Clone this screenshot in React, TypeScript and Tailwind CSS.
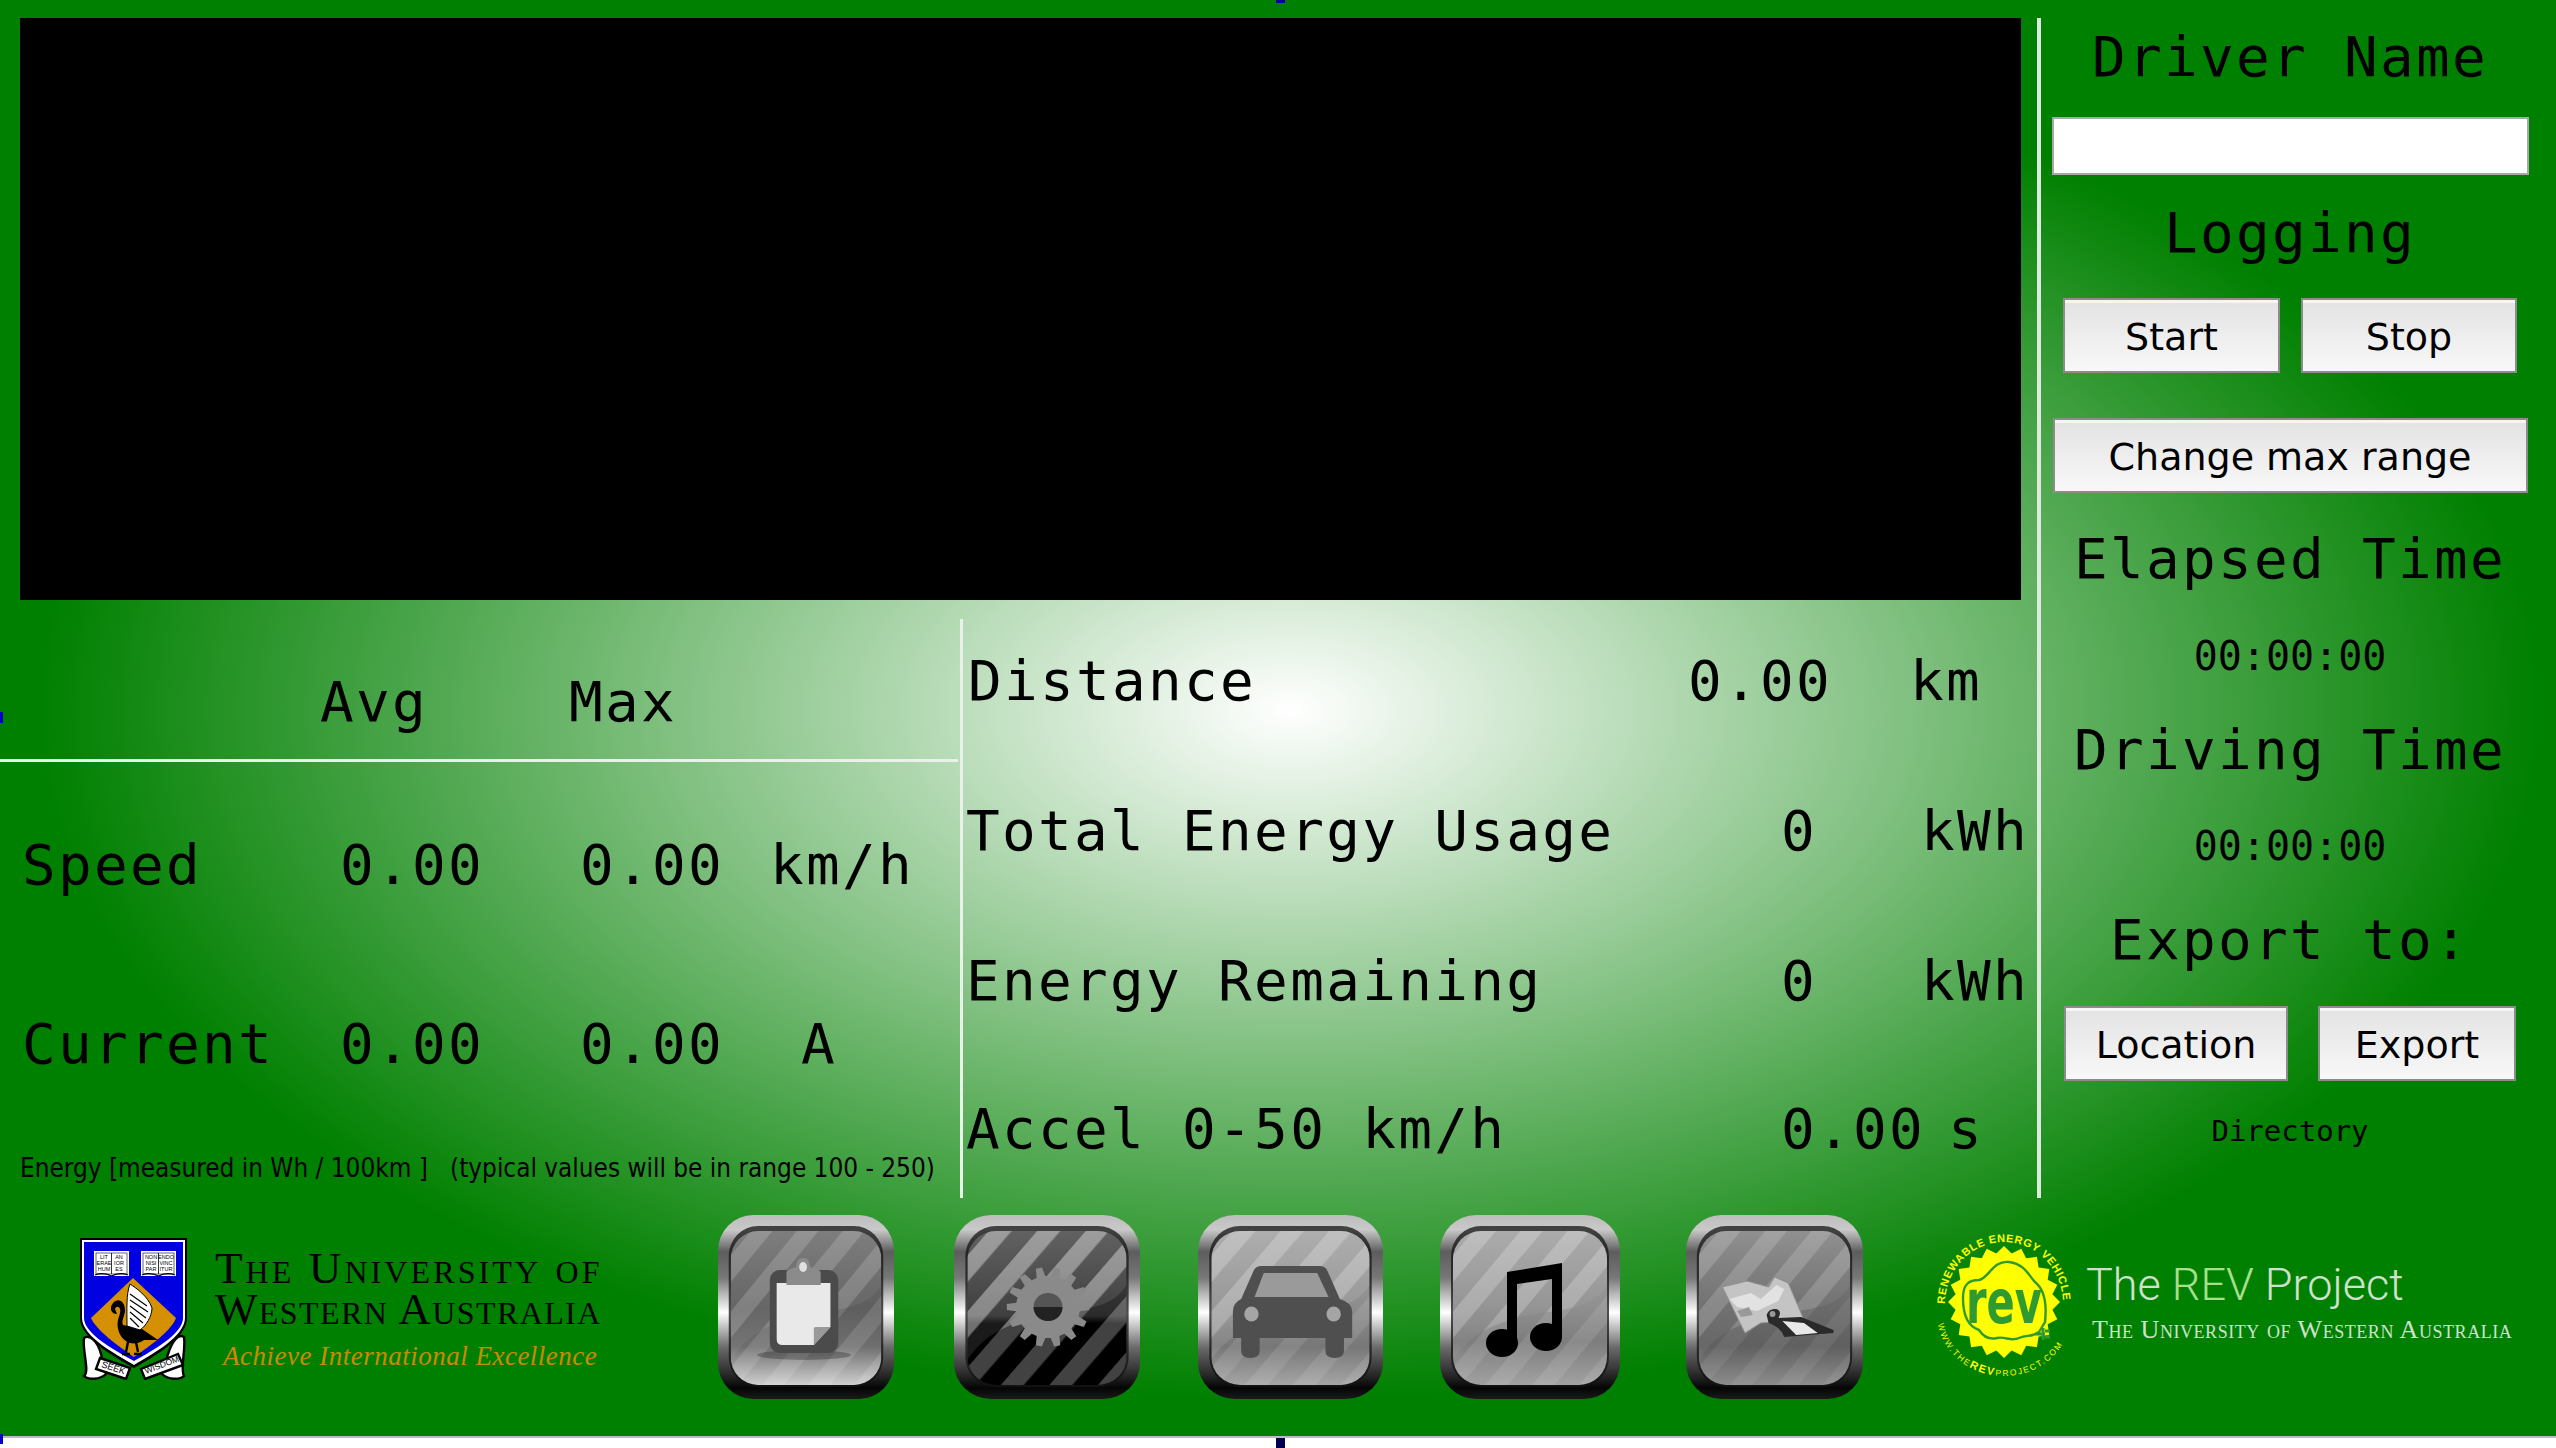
import React from "react";

const mono = "font-['DejaVu_Sans_Mono',monospace] text-[56px] tracking-[2.3px] leading-none whitespace-pre";

const Stripes = ({ id, opacity, width = 17 }: { id: string; opacity: number; width?: number }) => (
  <pattern id={id} width="36" height="36" patternUnits="userSpaceOnUse" patternTransform="rotate(40)">
    <rect width={width} height="36" fill="#fff" opacity={opacity} />
  </pattern>
);

type Face = { id: string; stops: [number, string][]; stripe: number; stripeBottom: number; glossDark: number };

const MetalButton = ({ face, className, children }: { face: Face; className: string; children: React.ReactNode }) => (
  <svg viewBox="0 0 180 184" preserveAspectRatio="none" className={className}>
    <defs>
      <linearGradient id={`${face.id}-frame`} x1="0" y1="0" x2="0" y2="1">
        <stop offset="0" stopColor="#bdbdbd" />
        <stop offset="0.08" stopColor="#c9c9c9" />
        <stop offset="0.2" stopColor="#5d5d5d" />
        <stop offset="0.34" stopColor="#777" />
        <stop offset="0.53" stopColor="#fff" />
        <stop offset="0.72" stopColor="#6a6a6a" />
        <stop offset="0.86" stopColor="#2c2c2c" />
        <stop offset="0.94" stopColor="#050505" />
        <stop offset="1" stopColor="#1a1a1a" />
      </linearGradient>
      <linearGradient id={`${face.id}-face`} x1="0" y1="0" x2="0" y2="1">
        {face.stops.map(([o, c]) => (
          <stop key={o} offset={o} stopColor={c} />
        ))}
      </linearGradient>
      <Stripes id={`${face.id}-st`} opacity={face.stripe} />
      <Stripes id={`${face.id}-sb`} opacity={face.stripeBottom} />
      <clipPath id={`${face.id}-clip`}>
        <rect x="13" y="16" width="154" height="154" rx="28" />
      </clipPath>
    </defs>
    <rect x="0" y="0" width="180" height="184" rx="36" fill={`url(#${face.id}-frame)`} />
    <rect x="11" y="11" width="158" height="161" rx="30" fill="#141414" opacity="0.75" />
    <g clipPath={`url(#${face.id}-clip)`}>
      <rect x="13" y="16" width="154" height="154" fill={`url(#${face.id}-face)`} />
      <rect x="13" y="16" width="154" height="154" fill={`url(#${face.id}-sb)`} />
      <path d="M13 16H167V70C150 100 110 92 70 105C45 112 25 125 13 145Z" fill="#fff" opacity={face.glossDark} />
      <path d="M13 16H167V70C150 100 110 92 70 105C45 112 25 125 13 145Z" fill={`url(#${face.id}-st)`} />
    </g>
    {children}
  </svg>
);

const clipboardFace: Face = { id: "clip", stops: [[0, "#777"], [0.5, "#5e5e5e"], [0.75, "#6e6e6e"], [1, "#cfcfcf"]], stripe: 0.05, stripeBottom: 0.12, glossDark: 0.05 };
const gearFace: Face = { id: "gear", stops: [[0, "#505050"], [0.55, "#2a2a2a"], [0.6, "#000"], [1, "#000"]], stripe: 0.16, stripeBottom: 0.26, glossDark: 0.1 };
const carFace: Face = { id: "car", stops: [[0, "#a5a5a5"], [0.55, "#8a8a8a"], [0.75, "#777"], [1, "#a5a5a5"]], stripe: 0.14, stripeBottom: 0.1, glossDark: 0.1 };
const musicFace: Face = { id: "music", stops: [[0, "#a8a8a8"], [0.5, "#8f8f8f"], [0.72, "#7d7d7d"], [1, "#a2a2a2"]], stripe: 0.13, stripeBottom: 0.1, glossDark: 0.05 };
const mapFace: Face = { id: "map", stops: [[0, "#8a8a8a"], [0.5, "#6a6a6a"], [0.75, "#606060"], [1, "#8c8c8c"]], stripe: 0.1, stripeBottom: 0.07, glossDark: 0.05 };

const gearTeeth = () => {
  const pts: string[] = [];
  const n = 14;
  for (let i = 0; i < n; i++) {
    const a = (i / n) * Math.PI * 2;
    const s = Math.PI / n;
    [[31, -s * 0.62], [40, -s * 0.34], [40, s * 0.34], [31, s * 0.62]].forEach(([r, d]) => {
      pts.push(`${(91 + r * Math.cos(a + d)).toFixed(1)},${(92 + r * Math.sin(a + d)).toFixed(1)}`);
    });
  }
  return pts.join(" ");
};

const starPoints = () => {
  const pts: string[] = [];
  const n = 20;
  for (let i = 0; i < n * 2; i++) {
    const a = (i / (n * 2)) * Math.PI * 2;
    const r = i % 2 === 0 ? 56 : 49;
    pts.push(`${(69 + r * Math.cos(a)).toFixed(1)},${(72 + r * Math.sin(a)).toFixed(1)}`);
  }
  return pts.join(" ");
};

const Crest = () => (
  <svg viewBox="0 0 108 142" className="w-[108px] h-[142px] shrink-0">
    <path d="M0 0H107V80C107 100 75 118 54 130C33 118 0 100 0 80Z" fill="#000" />
    <path d="M2 2H105V80C105 98 73 116 54 127C35 116 2 98 2 80Z" fill="#fff" />
    <path d="M4 4H103V80C103 96 72 113 54 123C36 113 4 96 4 80Z" fill="#0000e0" />
    <path d="M53 40L96 80C92 92 70 108 54 119C38 108 16 92 11 80Z" fill="#d49000" />
    {[0, 47].map((dx, i) => (
      <g key={dx} transform={`translate(${dx} 0)`}>
        <rect x="14" y="13" width="35" height="25" fill="#fff" />
        <rect x="16" y="15" width="31" height="21" fill="#fff" stroke="#000" strokeWidth="0.6" />
        <line x1="31.5" y1="15" x2="31.5" y2="36" stroke="#000" strokeWidth="0.8" />
        <path d="M15 37Q23 34 31.5 38Q40 34 48 37" stroke="#000" strokeWidth="1.2" fill="none" />
        <g fontFamily="'Liberation Sans',sans-serif" fontSize="5.5" fill="#000" textAnchor="middle">
          <text x="24" y="21">{i ? "NON" : "LIT"}</text>
          <text x="39" y="21">{i ? "ENDO" : "AN"}</text>
          <text x="24" y="27">{i ? "NISI" : "ERAE"}</text>
          <text x="39" y="27">{i ? "VINC" : "IOR"}</text>
          <text x="24" y="33">{i ? "PAR" : "HUM"}</text>
          <text x="39" y="33">{i ? "ITUR" : "ES"}</text>
        </g>
      </g>
    ))}
    <path d="M37 76C31 76 29 70 33 65C38 59 45 63 45 72C45 78 41 82 43 87L62 91L78 102L64 102C60 105 55 106 50 105C40 102 36 90 38 82C39 78 41 74 40 71C39 68 36 68 35 71L37 76Z" fill="#000" />
    <path d="M47 88C47 72 46 56 50 46C56 50 68 58 72 70C72 78 66 88 60 92Z" fill="#fff" stroke="#000" strokeWidth="1" />
    <path d="M50 56L67 68M50 62L68 74M50 68L66 80M50 74L63 85M50 80L59 89" stroke="#000" strokeWidth="1.2" />
    <path d="M48 104L46 114M56 104L58 114M42 116H50M54 116H62" stroke="#000" strokeWidth="2.4" />
    <path d="M4 100C10 96 18 104 21 116L26 136C20 142 8 142 4 138C10 134 2 112 4 100Z" fill="#fff" stroke="#000" strokeWidth="2.4" />
    <path d="M104 99C98 95 92 104 88 116L82 136C88 142 100 142 104 138C100 130 106 112 104 99Z" fill="#fff" stroke="#000" strokeWidth="2.4" />
    <path d="M20 120L50 130L46 141L16 131Z" fill="#fff" stroke="#000" strokeWidth="2.4" />
    <path d="M61 131L98 116L103 127L65 141Z" fill="#fff" stroke="#000" strokeWidth="2.4" />
    <text transform="translate(21 129) rotate(18)" fontFamily="'Liberation Sans',sans-serif" fontSize="9" fill="#000">SEEK</text>
    <text transform="translate(66 136) rotate(-21)" fontFamily="'Liberation Sans',sans-serif" fontSize="8.5" fill="#000">WISDOM</text>
  </svg>
);

const RevLogo = () => (
  <svg viewBox="0 0 137 145" className="w-[137px] h-[145px] shrink-0 overflow-visible">
    <defs>
      <path id="rev-top" d="M10 74A59 62 0 0 1 128 74" />
      <path id="rev-bottom" d="M2 84A67 62 0 0 0 136 84" />
    </defs>
    <text fontFamily="'Liberation Sans',sans-serif" fontSize="11" fontWeight="700" fill="#ffff00">
      <textPath href="#rev-top" textLength="186" lengthAdjust="spacing">RENEWABLE ENERGY VEHICLE</textPath>
    </text>
    <text fontFamily="'Liberation Sans',sans-serif" fontSize="8.5" fill="#ffff00">
      <textPath href="#rev-bottom" startOffset="10" textLength="160" lengthAdjust="spacing">
        WWW.THE<tspan fontWeight="700" fontSize="11">REV</tspan>PROJECT.COM
      </textPath>
    </text>
    <polygon points={starPoints()} fill="#ffff00" />
    <path d="M28 68C28 54 34 50 44 50C54 48 58 30 74 32C90 34 94 46 100 52C110 60 112 74 110 92L104 102C96 108 92 104 84 108C76 112 70 106 62 108C54 110 48 106 44 100C32 96 28 84 28 68Z" fill="none" stroke="#2f9a2f" strokeWidth="2.4" />
    <path d="M100 104H110M108 98V110M110 101H115M110 107H115" stroke="#2f9a2f" strokeWidth="3" />
    <text x="69" y="93" textAnchor="middle" fontFamily="'DejaVu Sans',sans-serif" fontWeight="700" fontSize="60" textLength="76" lengthAdjust="spacingAndGlyphs" fill="#2f9a2f">rev</text>
  </svg>
);

const Btn = ({ className, children }: { className: string; children: React.ReactNode }) => (
  <button className={`border-2 border-[#8c8c8c] bg-gradient-to-b from-[#e3e3e3] to-[#f8f8f8] shadow-[inset_0_3px_0_#f5f5f5] text-black font-['DejaVu_Sans',sans-serif] text-[38px] leading-none pt-[2px] ${className}`}>
    {children}
  </button>
);

const Row = ({ className, cells }: { className: string; cells: string[] }) => (
  <div className={`grid items-center ${className}`}>
    {cells.map((c, i) => (
      <span key={i} className={mono}>{c}</span>
    ))}
  </div>
);

export default function App() {
  return (
    <div className="relative w-[2556px] h-[1448px] overflow-hidden bg-white">
      <div className="h-[1438px] bg-[#008000] bg-[radial-gradient(ellipse_1250px_690px_at_1290px_710px,#ffffff_0%,#008000_100%)] text-black flex flex-col border-b-2 border-[#bbbbbb]">
        <div className="flex h-[1198px] pt-[18px] shrink-0">
          <div className="w-[2037px] flex flex-col shrink-0">
            <div className="ml-[20px] w-[2001px] h-[582px] bg-black shrink-0" />
            <div className="flex flex-1 pt-[19px]">
              <div className="w-[958px] flex flex-col shrink-0">
                <div className="h-[143px] pl-[320px] pt-[55px] flex gap-[141px] shrink-0 border-b-[3px] border-[#e8f2e8]">
                  <span className={mono}>Avg</span>
                  <span className={mono}>Max</span>
                </div>
                <Row className="h-[102px] mt-[52px] grid-cols-[318px_240px_190px_1fr] pl-[22px]" cells={["Speed", "0.00", "0.00", "km/h"]} />
                <Row className="h-[102px] mt-[77px] grid-cols-[318px_240px_221px_1fr] pl-[22px]" cells={["Current", "0.00", "0.00", "A"]} />
                <p className="ml-[20px] mt-[61px] text-[25.9px] leading-none whitespace-pre font-['DejaVu_Sans_Condensed','DejaVu_Sans',sans-serif]">
                  {"Energy [measured in Wh / 100km ]   (typical values will be in range 100 - 250)"}
                </p>
              </div>
              <div className="w-[3px] bg-[#e8f2e8] ml-[2px] shrink-0" />
              <div className="flex-1 pl-[3px] flex flex-col">
                <Row className="h-[60px] mt-[32px] grid-cols-[720px_222px_1fr] pl-[2px]" cells={["Distance", "0.00", "km"]} />
                <Row className="h-[60px] mt-[90px] grid-cols-[815px_140px_1fr]" cells={["Total Energy Usage", "0", "kWh"]} />
                <Row className="h-[60px] mt-[90px] grid-cols-[815px_140px_1fr]" cells={["Energy Remaining", "0", "kWh"]} />
                <Row className="h-[60px] mt-[88px] grid-cols-[815px_167px_1fr]" cells={["Accel 0-50 km/h", "0.00", "s"]} />
              </div>
            </div>
          </div>
          <div className="w-[4px] bg-[#dfe9df] shrink-0" />
          <div className="flex-1 flex flex-col items-center pr-[17px]">
            <div className={`h-[78px] flex items-center ${mono}`}>Driver Name</div>
            <input className="w-[477px] h-[58px] mt-[21px] bg-white border-2 border-[#a8a8a8]" readOnly />
            <div className={`h-[78px] mt-[19px] flex items-center ${mono}`}>Logging</div>
            <div className="mt-[26px] flex gap-[21px]">
              <Btn className="w-[217px] h-[75px]">Start</Btn>
              <Btn className="w-[216px] h-[75px]">Stop</Btn>
            </div>
            <Btn className="w-[475px] h-[75px] mt-[45px]">Change max range</Btn>
            <div className={`h-[78px] mt-[27px] flex items-center ${mono}`}>Elapsed Time</div>
            <div className="h-[50px] mt-[33px] flex items-center font-['DejaVu_Sans_Mono',monospace] text-[40px]">00:00:00</div>
            <div className={`h-[78px] mt-[30px] flex items-center ${mono}`}>Driving Time</div>
            <div className="h-[50px] mt-[32px] flex items-center font-['DejaVu_Sans_Mono',monospace] text-[40px]">00:00:00</div>
            <div className={`h-[78px] mt-[30px] flex items-center ${mono}`}>Export to:</div>
            <div className="mt-[27px] flex gap-[30px]">
              <Btn className="w-[224px] h-[75px]">Location</Btn>
              <Btn className="w-[198px] h-[75px]">Export</Btn>
            </div>
            <div className="h-[40px] mt-[31px] flex items-center font-['DejaVu_Sans_Mono',monospace] text-[29px]">Directory</div>
          </div>
        </div>

        <div className="flex-1 flex items-start">
          <div className="ml-[80px] mt-[40px] shrink-0">
            <Crest />
          </div>
          <div className="ml-[27px] mt-[50px] w-[420px] shrink-0 font-['Liberation_Serif',serif]">
            <p className="text-[45px] leading-[41px] [font-variant:small-caps] tracking-[3.1px] whitespace-nowrap">The University of</p>
            <p className="text-[45px] leading-[41px] [font-variant:small-caps] tracking-[1.4px] whitespace-nowrap">Western Australia</p>
            <p className="mt-[13px] ml-[8px] text-[27px] leading-none italic tracking-[0.5px] text-[#cc8a00] whitespace-nowrap">Achieve International Excellence</p>
          </div>
          <div className="ml-[83px] mt-[17px] flex shrink-0">
            <MetalButton face={clipboardFace} className="w-[176px] h-[184px] shrink-0">
              <ellipse cx="88" cy="140" rx="48" ry="5" fill="#000" opacity="0.25" />
              <rect x="53" y="55" width="70" height="83" rx="10" fill="#4b4b4b" />
              <path d="M60 68H115V112L98 130H66Q60 130 60 124Z" fill="#e9e9e9" />
              <path d="M98 130V114Q98 112 100 112H115Z" fill="#9a9a9a" />
              <path d="M70 70V58Q70 55 74 54L80 52Q80 43 87 43Q94 43 94 52L100 54Q105 55 105 58V70Z" fill="#8b8b8b" />
              <ellipse cx="87" cy="52" rx="4" ry="5" fill="#e0e0e0" />
            </MetalButton>
            <MetalButton face={gearFace} className="w-[186px] h-[184px] ml-[60px] shrink-0">
              <polygon points={gearTeeth()} fill="#8a8a8a" />
              <circle cx="91" cy="92" r="14" fill="#555" />
              <path d="M77 92H105A14 14 0 0 1 77 92Z" fill="#222" />
            </MetalButton>
            <MetalButton face={carFace} className="w-[185px] h-[184px] ml-[58px] shrink-0">
              <path d="M34 123V96Q34 88 42 84L54 56Q56 51 62 51H118Q124 51 126 56L138 84Q150 88 150 96V123H142V136Q142 143 133 143Q124 143 124 136V123H60V136Q60 143 51 143Q42 143 42 136V123Z" fill="#4f4f4f" />
              <path d="M64 58H116L127 82H55Z" fill="#9a9a9a" />
              <ellipse cx="52" cy="99" rx="7" ry="7.5" fill="#a5a5a5" />
              <ellipse cx="132" cy="99" rx="7" ry="7.5" fill="#a5a5a5" />
            </MetalButton>
            <MetalButton face={musicFace} className="w-[180px] h-[184px] ml-[57px] shrink-0">
              <path d="M67 57L122 48V122H112V64L77 69V128H67Z" fill="#000" />
              <ellipse cx="62" cy="128" rx="16" ry="14" fill="#000" />
              <ellipse cx="106" cy="122" rx="16" ry="14" fill="#000" />
            </MetalButton>
            <MetalButton face={mapFace} className="w-[177px] h-[184px] ml-[66px] shrink-0">
              <path d="M37 72L62 66L84 72L90 62L104 68L120 105L76 108L60 118Z" fill="#c4c4c4" stroke="#8f8f8f" strokeWidth="1" />
              <path d="M44 84L66 78L76 84L92 70L100 74L94 86L72 96L52 92Z" fill="#e2e2e2" />
              <path d="M52 96L64 92L68 100L56 102Z" fill="#999" />
              <path d="M82 100Q84 93 92 94Q98 96 94 103L117 102L150 115L150 118L100 122Q96 112 84 108Z" fill="#2a2a2a" />
              <path d="M98 106L120 108L134 118L112 120Z" fill="#e8e8e8" />
              <circle cx="88" cy="99" r="3" fill="#999" />
            </MetalButton>
          </div>
          <div className="ml-[72px] mt-[32px] shrink-0">
            <RevLogo />
          </div>
          <div className="ml-[14px] mt-[61px] shrink-0 text-[#cfe0cf]">
            <p className="font-['Roboto',sans-serif] font-light text-[45px] leading-[52px] whitespace-nowrap">
              The <span className="text-[#a6e08c]">REV</span> Project
            </p>
            <p className="mt-[6px] ml-[6px] font-['Liberation_Serif',serif] text-[26px] tracking-[0.55px] leading-none [font-variant:small-caps] whitespace-nowrap">The University of Western Australia</p>
          </div>
        </div>
      </div>
      <div className="absolute left-0 top-[712px] w-[3px] h-[11px] bg-[#0000c8]" />
      <div className="absolute left-0 top-[1434px] w-[3px] h-[10px] bg-[#0000c8]" />
      <div className="absolute left-[1276px] top-0 w-[9px] h-[3px] bg-[#0000a0]" />
      <div className="absolute left-[1276px] top-[1438px] w-[9px] h-[10px] bg-[#000050]" />
    </div>
  );
}
